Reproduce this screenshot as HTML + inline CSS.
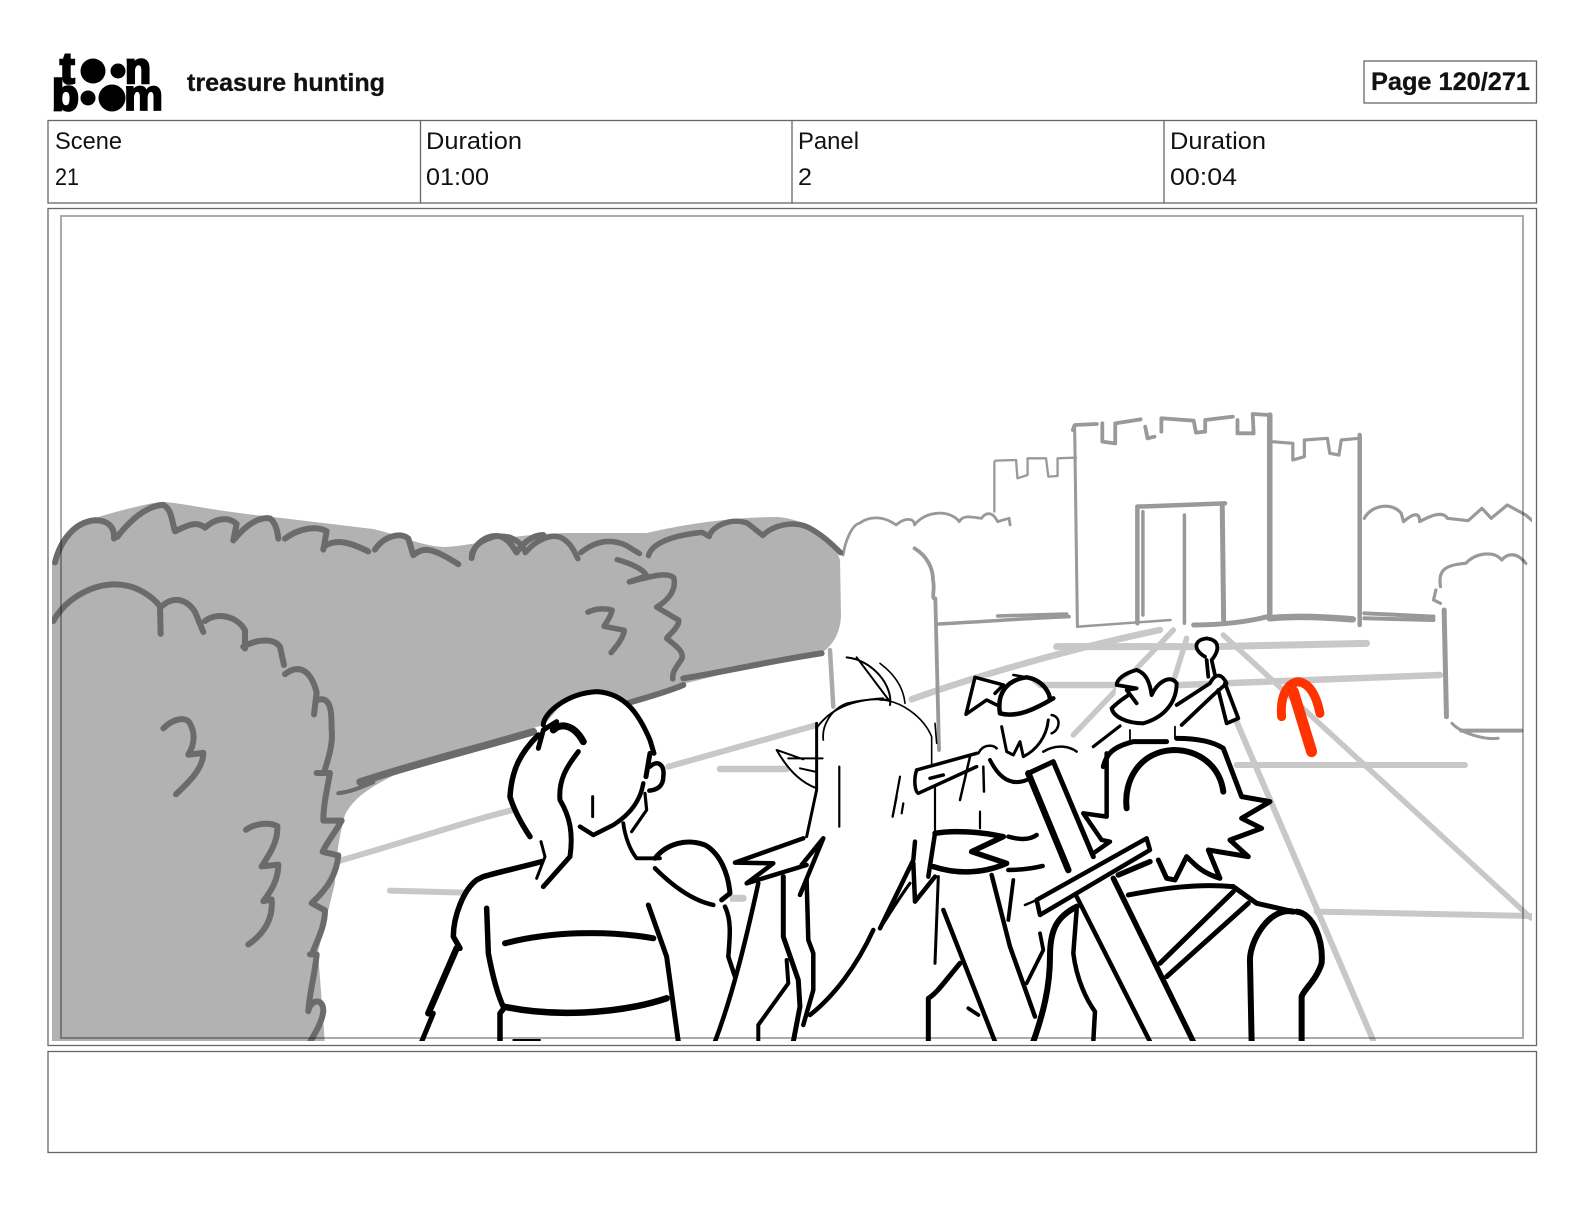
<!DOCTYPE html>
<html><head><meta charset="utf-8"><title>treasure hunting</title>
<style>
html,body{margin:0;padding:0;background:#fff}
body{width:1584px;height:1224px;overflow:hidden;position:relative}
svg{position:absolute;left:0;top:0}
path{vector-effect:non-scaling-stroke;fill:none;stroke-linecap:round;stroke-linejoin:round}
text{font-family:"Liberation Sans",sans-serif;fill:#111}
</style></head><body>
<svg width="1584" height="1224" viewBox="0 0 1584 1224" xmlns="http://www.w3.org/2000/svg">
<defs><clipPath id="art"><rect x="52" y="214" width="1480" height="827"/></clipPath></defs>
<g fill="none" stroke="#666" stroke-width="1.3">
<rect x="48" y="120.500" width="1488.500" height="82.500"/>
<path d="M420.500,120.500V203M792,120.500V203M1164,120.500V203"/>
<rect x="1364" y="61" width="172.500" height="42"/>
<rect x="48" y="208.500" width="1488.500" height="837"/>
<rect x="48" y="1051.500" width="1488.500" height="101"/>
</g>
<!-- logo -->
<g>
<text x="60" y="83" font-size="44" font-weight="700" stroke="#000" stroke-width="2.500" style="fill:#000">t</text>
<circle cx="93" cy="71" r="12.500" fill="#000"/><circle cx="118" cy="71" r="7.500" fill="#000"/>
<text x="125" y="83" font-size="44" font-weight="700" textLength="26" lengthAdjust="spacingAndGlyphs" stroke="#000" stroke-width="2.500" style="fill:#000">n</text>
<text x="52" y="110" font-size="44" font-weight="700" stroke="#000" stroke-width="2.500" style="fill:#000">b</text>
<circle cx="88" cy="98" r="7.500" fill="#000"/><circle cx="112" cy="98" r="13.500" fill="#000"/>
<text x="124" y="110" font-size="44" font-weight="700" stroke="#000" stroke-width="1.800" style="fill:#000">m</text>
</g>
<text x="187" y="91" font-size="25" font-weight="700" textLength="198" lengthAdjust="spacingAndGlyphs" stroke="#111" stroke-width=".3">treasure hunting</text>
<text x="1371" y="90" font-size="25" font-weight="700" textLength="159" lengthAdjust="spacingAndGlyphs" stroke="#111" stroke-width=".3">Page 120/271</text>
<g font-size="24">
<text x="55" y="149" textLength="67" lengthAdjust="spacingAndGlyphs">Scene</text>
<text x="55" y="185" textLength="24" lengthAdjust="spacingAndGlyphs">21</text>
<text x="426" y="149" textLength="96" lengthAdjust="spacingAndGlyphs">Duration</text>
<text x="426" y="185" textLength="63" lengthAdjust="spacingAndGlyphs">01:00</text>
<text x="798" y="149" textLength="61" lengthAdjust="spacingAndGlyphs">Panel</text>
<text x="798" y="185" textLength="14" lengthAdjust="spacingAndGlyphs">2</text>
<text x="1170" y="149" textLength="96" lengthAdjust="spacingAndGlyphs">Duration</text>
<text x="1170" y="185" textLength="67" lengthAdjust="spacingAndGlyphs">00:04</text>
</g>

<g clip-path="url(#art)">
<!-- hedge fill -->
<path style="fill:#b2b2b2" d="M52,1044V564C56,545 68,528 88,520C115,512 140,505 160,502C180,502 205,510 273,517L373,529C400,535 420,546 445,547C480,545 500,535 566,533L647,533C680,525 730,517 778,517C810,520 835,540 840,560L841,616C840,635 832,645 823,652L787,658L687,683L627,700L533,728L400,772C375,785 355,795 345,815C338,840 336,860 335,883L318,952L325,1044Z"/>

<!-- roads -->
<g transform="translate(400,620) scale(.3333)" stroke="#c8c8c8" stroke-width="6">
<path d="M-190,725C100,640 250,590 340,570"/>
<path d="M805,440L1250,315"/>
<path d="M960,447H1160" stroke-width="6.500"/>
<path d="M-30,812L190,818" stroke-width="6"/>
<path d="M995,835H1030" stroke-width="7"/>
</g>
<g transform="translate(880,620) scale(.3333)" stroke="#c8c8c8" stroke-width="6">
<path d="M95,238C200,200 500,100 840,30" stroke-width="6.500"/>
<path d="M530,80H1000L1460,70" stroke-width="7"/>
<path d="M340,195H900L1680,165" stroke-width="6.500"/>
<path d="M580,345L880,30" stroke-width="5.500"/>
<path d="M885,170L920,55" stroke-width="5.500"/>
<path d="M1030,45L1953,894" stroke-width="5.500"/>
<path d="M1070,305L1480,1262" stroke-width="6"/>
<path d="M1070,435H1755" stroke-width="6"/>
<path d="M1310,875L1953,888" stroke-width="6"/>
</g>

<!-- castle -->
<g transform="translate(820,390) scale(.4613,.3333)" stroke="#999" stroke-width="3.800">
<path d="M548,120L552,105L600,102M612,100L612,155L640,160L640,100L695,88M705,110L710,145L725,140M740,125V85L810,92L815,128L835,125V90L895,80M905,90V130L940,130L938,72L975,75"/>
<path d="M975,75V680" stroke-width="5.500"/>
<path d="M552,110L558,710" stroke-width="3"/>
<path d="M560,710L760,690" stroke-width="2.500"/>
<path d="M688,700V350L878,340" stroke-width="4.500"/>
<path d="M700,365V675" stroke-width="3.500"/><path d="M790,375V700" stroke-width="3.500"/><path d="M872,350L875,690" stroke-width="5"/>
<path d="M810,705C870,705 930,695 970,680" stroke-width="5"/>
<path d="M980,155L1025,160L1025,210L1050,200V150L1100,145L1105,190L1125,195L1130,150L1168,145" stroke-width="3.200"/>
<path d="M1170,135V705" stroke-width="4.500"/>
<path d="M378,365V215M380,212L425,210L428,265L450,255L450,205L490,205L495,260L515,258V205L555,203" stroke-width="2.300"/>
<path d="M50,495C55,450 70,405 85,400C110,375 140,380 165,405C185,380 205,385 205,405C225,365 280,355 302,395C310,370 340,385 350,385C360,365 375,365 385,395L410,385L412,405" stroke-width="2.800"/>
<path d="M205,475C235,500 245,540 245,570C250,600 240,630 250,625L258,1080" stroke-width="3.800"/>
<path d="M258,702C350,695 450,685 540,680" stroke-width="3.500"/><path d="M385,678L535,672" stroke-width="3.500"/>
<path d="M975,685C1050,675 1120,685 1155,688" stroke-width="6.500"/>
<path d="M1180,670L1330,680M1180,685L1330,690" stroke-width="4"/>
<path d="M1180,385C1195,345 1240,335 1260,370L1265,395C1290,365 1300,370 1300,395C1320,380 1350,360 1360,385L1405,392L1435,355L1455,385L1490,345L1530,375L1551,400" stroke-width="3.200"/>
<path d="M1345,590C1340,545 1350,525 1400,520C1420,490 1460,480 1478,510C1490,490 1510,485 1530,520M1335,600L1330,630L1345,640" stroke-width="3.200"/>
<path d="M1353,660L1358,980" stroke-width="5"/>
<path d="M1370,1000C1390,1030 1440,1050 1470,1045" stroke-width="3"/><path d="M1390,1022H1520" stroke-width="4"/>
</g>

<!-- hedge outlines -->
<g transform="translate(40,480) scale(.3333,.3663)" stroke="#6b6b6b" stroke-width="6">
<path d="M45,225C60,170 100,115 165,110C200,110 225,125 222,160M232,155C270,110 320,70 370,68C395,80 395,110 405,140C440,125 470,110 495,130C520,110 560,95 590,120L580,165M585,160C620,120 660,100 690,105C705,115 712,135 715,160M735,160C780,130 830,125 860,140L850,190M855,180C890,160 930,170 985,195M1005,190C1030,155 1080,140 1105,160L1120,205C1150,185 1170,180 1255,230M1295,213C1300,170 1350,145 1385,155C1410,165 1420,185 1430,198C1450,170 1480,150 1510,150"/>
<path d="M40,385C80,320 160,285 225,285C290,285 340,320 360,345L362,420M365,345C400,315 440,325 465,360L490,415M495,385C530,360 590,370 615,410L615,460M610,455C650,435 700,430 720,455L732,505M735,530C770,505 810,510 830,580L822,640M835,600C875,590 875,640 875,680C880,720 865,760 855,790M830,800H870C860,850 850,890 850,930L905,930C880,970 860,990 848,1015L895,1025C890,1070 870,1110 815,1155L855,1175C855,1220 830,1260 820,1285M810,1295L830,1295C825,1350 810,1390 805,1450C810,1420 850,1410 850,1450C845,1490 810,1530 795,1560"/>
<path d="M370,678C400,650 440,645 450,665C465,690 465,720 445,750L490,745C490,790 440,830 408,858"/>
<path d="M618,955C650,935 690,935 712,945C715,985 690,1020 665,1055L715,1050C715,1090 695,1120 670,1150L695,1145C700,1200 670,1240 625,1268"/>
<path d="M895,855C930,852 960,840 1000,825" stroke-width="4"/>
</g>
<g transform="scale(1.0102)" stroke="#6b6b6b" stroke-width="5.500">
<path d="M467,548C472,535 490,528 505,532C512,535 518,540 520,547C530,535 545,528 555,532C565,537 568,545 572,553M575,547C590,535 605,533 620,540L633,548M642,550C645,538 665,530 695,527L702,531C705,520 725,512 740,518L755,530C765,520 785,515 800,522C815,530 825,540 832,547"/>
<path d="M611,554C625,558 638,564 640,570L623,576C640,572 660,565 667,572C670,585 660,595 650,601L672,614C672,622 660,630 660,632C670,640 677,645 675,652C670,660 665,665 666,672"/>
<path d="M582,606C590,602 600,602 606,604C604,612 600,616 598,620L618,624C617,632 610,640 605,646"/>
</g>
<g transform="translate(400,620) scale(.3333)" stroke="#6b6b6b" stroke-width="6.500">
<path d="M-120,486C50,430 250,380 400,335" stroke-width="7.500"/>
<path d="M680,250C730,235 790,220 850,195" stroke-width="6"/>
<path d="M850,175C950,160 1100,125 1265,100" stroke-width="6"/>
<path d="M1290,90L1300,260" stroke="#aaa" stroke-width="4.500"/>
</g>

<!-- white silhouettes -->
<g fill="#fff">
<g transform="translate(400,620) scale(.3333)">
<polygon points="420,330 500,235 590,215 690,250 760,400 790,450 760,510 700,630 720,710 780,715 860,660 950,690 990,800 990,1000 1005,1070 945,1262 65,1262 160,990 160,890 230,780 420,730 390,650 335,530 345,440"/>
<polygon points="1005,728 1200,660 1250,510 1130,390 1250,400 1250,310 1340,250 1470,240 1540,300 1560,800 1420,1000 1230,1262 945,1262 1075,790"/>
</g>
<g transform="translate(880,620) scale(.3333)">
<polygon points="110,450 290,400 258,283 285,172 440,172 520,240 530,350 590,395 640,500 680,590 640,720 470,880 465,1262 140,1262 0,1262 0,925 100,720 165,640 165,500"/>
<polygon points="640,380 700,270 710,195 770,150 890,190 890,255 990,190 975,110 945,80 980,55 1020,75 1005,165 1040,190 1075,295 1040,310 1015,220 905,315 880,370 670,440"/>
<polygon points="610,580 680,400 760,365 1030,385 1085,530 1170,545 1105,710 1060,800 1240,875 1310,910 1330,1030 1265,1130 1265,1262 460,1262 510,950 590,830"/>
</g>
</g>

<!-- woman + elf -->
<g transform="translate(400,620) scale(.3333)" stroke="#000" stroke-width="5">
<path d="M430,315C430,280 500,220 590,215C680,220 720,290 750,360L762,400M750,400L738,470" stroke-width="5"/>
<path d="M730,490C720,550 680,590 640,615L580,645L540,620" stroke-width="4.500"/>
<path d="M750,440C770,420 795,430 790,470C790,500 770,510 748,512" stroke-width="4.500"/>
<path d="M460,330C480,310 520,310 550,365" stroke-width="7"/>
<path d="M470,305L430,330L415,385" stroke-width="5"/>
<path d="M415,345C360,400 335,450 330,530C345,580 370,620 390,650" stroke-width="5.500"/>
<path d="M535,395C500,440 475,480 480,540C510,590 520,640 510,710L430,800" stroke-width="5"/>
<path d="M423,665L435,710L410,775" stroke-width="3"/>
<path d="M578,530V590" stroke-width="3"/>
<path d="M670,610C675,650 690,690 710,715H780" stroke-width="3.800"/>
<path d="M735,520L740,570L695,635" stroke-width="3.200"/>
<path d="M765,715C800,670 860,655 915,675C960,700 985,760 990,820L965,840" stroke-width="5"/>
<path d="M765,745C810,790 870,840 940,855" stroke-width="4.500"/>
<path d="M975,860C995,900 990,950 985,1010L1005,1070" stroke-width="4.500"/>
<path d="M425,725C350,745 300,755 250,770L230,780C190,810 160,890 160,950L180,985" stroke-width="5.500"/>
<path d="M170,985L85,1180" stroke-width="6.500"/><path d="M100,1180L65,1265" stroke-width="5"/>
<path d="M260,865L265,1000C280,1080 295,1130 312,1165L300,1180V1265" stroke-width="5.500"/>
<path d="M315,970C450,935 620,930 760,955" stroke-width="6"/>
<path d="M745,855L800,1010L835,1265" stroke-width="5"/>
<path d="M312,1160C450,1190 650,1185 800,1135" stroke-width="6.500"/>
<path d="M340,1260H420" stroke-width="2"/>
<path d="M1005,728L1210,655M1005,728L1120,730L1040,790L1220,735" stroke-width="4.500"/>
<path d="M1270,655L1205,735M1270,655L1200,825" stroke-width="4.500"/>
<path d="M1075,790C1040,950 1000,1120 945,1265" stroke-width="4.500"/>
<path d="M1150,770L1150,950L1195,1080L1200,1160L1180,1265" stroke-width="5"/>
<path d="M1160,1020L1165,1090L1075,1215V1265" stroke-width="4"/>
<path d="M1220,780L1225,960L1240,1000V1110L1210,1215" stroke-width="4.500"/>
<path d="M1230,1185C1300,1130 1370,1040 1420,930" stroke-width="4.500"/>
<path d="M1440,925C1470,880 1500,830 1530,790" stroke-width="3.200"/>
<path d="M1250,310V510L1220,650" stroke-width="3"/>
<path d="M1270,360C1265,320 1290,270 1340,250C1380,240 1420,235 1470,240" stroke-width="1.800"/>
<path d="M1253,320C1290,270 1350,240 1450,235" stroke-width="1.800"/>
<path d="M1470,255C1480,200 1420,120 1340,112M1370,112L1470,245" stroke-width="2"/>
<path d="M1130,390C1170,460 1210,490 1250,505M1130,390L1210,418M1165,415H1268M1200,445L1245,455" stroke-width="2"/>
<path d="M1318,440V620M1490,530L1478,590" stroke-width="2.200"/>
</g>

<!-- centre + right figures -->
<g transform="translate(880,620) scale(.3333)" stroke="#000" stroke-width="4.500">
<path d="M0,130C40,160 70,200 75,250M0,240C60,240 130,290 155,350L155,440M165,310L170,370" stroke-width="1.600"/>
<path d="M110,450L290,400M110,450C100,480 105,515 115,520L290,440M150,475L190,465" stroke-width="3.500"/>
<path d="M295,400C310,370 340,375 350,385M270,410L240,540M310,440L312,515" stroke-width="2.500"/>
<path d="M330,420C355,470 390,500 440,480" stroke-width="4"/>
<path d="M165,500V630M300,575V625M60,470L38,590M70,550L65,580" stroke-width="2.200"/>
<path d="M285,172L258,283L320,240L350,255M285,172L370,195L345,220" stroke-width="3.500"/>
<path d="M360,280C350,220 380,180 440,172C490,180 510,220 510,240" stroke-width="4.500"/>
<path d="M360,280C410,295 470,265 520,235" stroke-width="4.500"/>
<path d="M400,165C440,170 480,180 500,205" stroke-width="2.500"/>
<path d="M515,285C545,290 540,330 515,340" stroke-width="2.500"/>
<path d="M505,300C500,350 470,390 430,410L420,365L400,405L380,395L365,320" stroke-width="3"/>
<path d="M490,395C530,370 570,380 590,395" stroke-width="2.500"/>
<path d="M165,640C220,630 300,635 370,650L275,695L380,730C300,765 220,760 160,740" stroke-width="5.500"/>
<path d="M385,650C420,660 450,660 470,645M385,750C420,750 460,745 488,738" stroke-width="4.500"/>
<path d="M105,665L100,720L0,925M100,730L105,845L165,770M165,640L145,770" stroke-width="4.500"/>
<path d="M445,460L520,425L640,710" stroke-width="5"/>
<path d="M445,460L565,750" stroke-width="6.500"/>
<path d="M470,840L800,655L810,690L480,885Z" stroke-width="4.500" style="fill:#fff"/>
<path d="M435,855L470,840" stroke-width="2.500"/>
<path d="M590,830L810,1265" stroke-width="4.500"/>
<path d="M700,775L940,1265" stroke-width="5.500"/>
<path d="M715,765L810,725" stroke-width="5.500"/>
<path d="M740,565C730,480 780,395 880,390C960,390 1020,440 1030,515" stroke-width="6"/>
<path d="M670,440C680,400 700,380 760,365L860,365M890,355C950,355 1000,365 1030,385L1085,530L1170,545L1085,595L1145,625L1050,660L1105,710L985,690L1020,775C970,760 950,740 920,710L885,780L860,775L835,720" stroke-width="5"/>
<path d="M680,400L680,590L610,580L665,660L690,665L640,700" stroke-width="4.500"/>
<path d="M750,330V360M885,320V355" stroke-width="1.800"/>
<path d="M745,825C850,805 950,790 1060,800L1130,850L1240,875" stroke-width="5"/>
<path d="M1250,875C1300,880 1330,960 1325,1030C1310,1080 1270,1110 1265,1130L1265,1265" stroke-width="6"/>
<path d="M1240,875C1170,860 1110,960 1110,1020L1115,1265" stroke-width="6"/>
<path d="M840,1030L1060,815M860,1070L1105,850" stroke-width="5"/>
<path d="M590,860C530,890 510,930 510,1010C510,1100 490,1180 460,1265" stroke-width="6"/>
<path d="M590,870L580,1000C590,1080 620,1140 645,1175L640,1265" stroke-width="4.500"/>
<path d="M190,870L345,1265" stroke-width="4.500"/>
<path d="M240,1030C190,1090 170,1120 145,1135V1265" stroke-width="5"/>
<path d="M175,770L165,1030" stroke-width="3"/>
<path d="M335,765L390,980L465,1190" stroke-width="4.500"/>
<path d="M400,780L385,900M480,940L490,990L440,1090M265,1165L295,1185" stroke-width="3.800"/>
<path d="M640,380L720,318" stroke-width="3.200"/>
<path d="M770,150C730,160 710,180 710,195L770,205L740,210L770,250" stroke-width="3.800"/>
<path d="M770,150C800,160 810,190 815,225C830,190 870,160 890,190C890,240 860,290 790,310C740,310 700,290 695,265C720,240 740,230 745,225" stroke-width="4"/>
<path d="M890,255L990,190C1000,170 1020,150 1040,190L1000,225L905,315" stroke-width="3.800"/>
<path d="M975,110C940,90 940,60 980,55C1020,60 1020,90 995,120L1005,165M980,120L985,170" stroke-width="3.800"/>
<path d="M1035,190L1075,295L1040,310L1015,210" stroke-width="3.800"/>
<!-- arrow -->
<path d="M1295,395L1240,215" stroke="#ff3300" stroke-width="11"/>
<path d="M1205,290C1200,230 1220,190 1255,185C1290,190 1310,230 1320,280" stroke="#ff3300" stroke-width="9"/>
</g>
</g>
<!-- inner safe frame -->
<rect x="61" y="216" width="1462" height="822" fill="none" stroke="#aaa" stroke-width="2" style="mix-blend-mode:multiply"/>
</svg>
</body></html>
